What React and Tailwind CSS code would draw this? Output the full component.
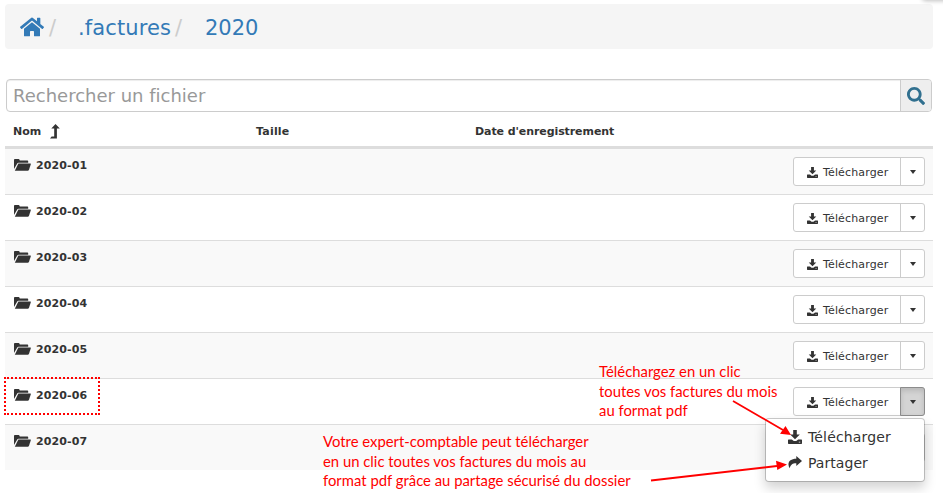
import { FaHome, FaSearch } from "react-icons/fa";

const months = ["2020-01", "2020-02", "2020-03", "2020-04", "2020-05", "2020-06", "2020-07"];

function FolderIcon() {
  return (
    <svg className="-mt-[2px] h-[12px] w-[17px] shrink-0" viewBox="0 0 17 12" fill="#333">
      <path d="M0 10V1.200C0 .5.4.1 1 .1h3.600c.5 0 .9.3 1 .8l.2.600h7.400c.6 0 1 .4 1 1v1.300H4.600c-.7 0-1.200.4-1.500 1z" />
      <path d="M4.400 4.500h12c.4 0 .6.3.5.6l-2 5.800c-.2.5-.6.8-1.100.8H.8z" />
    </svg>
  );
}

function DownloadIcon({ className }) {
  return (
    <svg className={className} viewBox="0 0 14 14" fill="#333">
      <path d="M5.200 0h3.600v4.500h3L7 9.300 2.200 4.500h3z" />
      <path d="M.6 9.400H3.800L5.800 11h2.400L10.200 9.400h3.200c.3 0 .6.3.6.6v3.200c0 .4-.3.7-.6.7H.6c-.3 0-.6-.3-.6-.7V10c0-.3.3-.6.6-.6zm10.200 2.300v.8h1.500v-.8z" fillRule="evenodd" />
    </svg>
  );
}

function ShareIcon() {
  return (
    <svg className="-mt-px h-[13px] w-[14px]" viewBox="0 0 14 13" fill="#333">
      <path d="M8.300 0 14 5l-5.700 5V7.300C5 7.200 3 8 1.700 12.300-1.400 7 1.500 2.700 8.300 2.700z" />
    </svg>
  );
}

function SortIcon() {
  return (
    <svg className="ml-[9px] h-[15px] w-[10px]" viewBox="0 0 10 15" fill="#333">
      <path d="M5.500 0 9.800 4.600H6.900V14.500H0L1.600 12.400H4.200V4.600H1.300z" />
    </svg>
  );
}

function SplitButton({ open, covered }) {
  return (
    <div className="mr-2 mt-2 flex h-[29px] w-[132px] shrink-0 rounded-[3px] border border-[#ccc] bg-white">
      <div className="flex w-[106px] items-center pl-[13px]">
        {!covered && (
          <>
            <DownloadIcon className="mt-px h-[11px] w-[11px]" />
            <span className="ml-[5px] mt-[3px] text-[11px] tracking-[0.15px]">Télécharger</span>
          </>
        )}
      </div>
      <div className={open ? "-my-px -mr-px flex w-[25px] items-center justify-center rounded-r-[3px] border border-[#8c8c8c] bg-[#d4d4d4] shadow-[inset_0_3px_5px_rgba(0,0,0,0.125)]" : "flex flex-1 items-center justify-center border-l border-[#ccc]"}>
        <span className="mt-px border-x-[3px] border-t-[4px] border-x-transparent border-t-[#333]" />
      </div>
    </div>
  );
}

function Menu() {
  return (
    <div className="absolute left-[765px] top-[418px] h-[64px] w-[160px] rounded-[4px] border border-black/20 bg-white bg-clip-padding pt-[5px] text-[14px] leading-[26px] tracking-[0.15px] shadow-[0_6px_12px_rgba(0,0,0,0.175)]">
      <div className="flex items-center pl-[22px]">
        <DownloadIcon className="h-[14px] w-[14px]" />
        <span className="ml-[6px]">Télécharger</span>
      </div>
      <div className="flex items-center pl-[22px]">
        <ShareIcon />
        <span className="ml-[6px] tracking-[0.05px]">Partager</span>
      </div>
    </div>
  );
}

export default function App() {
  return (
    <div className="relative h-[493px] w-[943px] overflow-hidden whitespace-nowrap bg-white pl-[5px] pt-[4px] font-['DejaVu_Sans',sans-serif] text-[#333] [font-variant-ligatures:none]">
      <div className="absolute -top-[10px] left-[922px] h-[10px] w-[40px] rounded-[4px] shadow-[0_1px_4px_rgba(0,0,0,0.25)]" />
      <nav className="flex h-[45px] w-[928px] items-center rounded-[4px] bg-[#f5f5f5] pl-[15px] text-[21px] text-[#337ab7]">
        <FaHome className="h-[24px] w-[24px]" />
        <span className="ml-[5px] mt-[5px] w-[25px] text-[#ccc]">/</span>
        <span className="ml-[4px] mt-[4px] w-[93px] tracking-[0.1px]">.factures</span>
        <span className="ml-[4px] mt-[5px] w-[25px] text-[#ccc]">/</span>
        <span className="ml-[5px] mt-[4px]">2020</span>
      </nav>
      <div className="ml-px mt-[30px] flex h-[33px] w-[926px] overflow-hidden rounded-[4px] border border-[#ccc] shadow-[inset_0_1px_1px_rgba(0,0,0,0.075)]">
        <div className="flex flex-1 items-center pl-[6px] text-[18px] text-[#999]">Rechercher un fichier</div>
        <div className="flex w-[31px] items-center justify-center border-l border-[#ccc] bg-[#eee]">
          <FaSearch className="h-[18px] w-[18px] text-[#31708f]" />
        </div>
      </div>
      <div className="flex h-[37px] w-[928px] items-center border-b-[3px] border-[#ddd] pl-2 pt-[6px] text-[11px] font-bold">
        <div className="flex w-[243px] items-center">Nom<span className="-mt-[2px]"><SortIcon /></span></div>
        <div className="w-[219px] tracking-[0.2px]">Taille</div>
        <div className="tracking-[-0.08px]">Date d'enregistrement</div>
      </div>
      <div className="w-[928px]">
        {months.map((month, i) => (
          <div key={month} className="flex h-[46px] justify-between border-b border-[#ddd] odd:bg-[#f9f9f9] last:h-[45px] last:border-b-0">
            <div className="flex h-[33px] items-center pl-[9px] text-[11px] font-bold">
              <FolderIcon />
              <span className="ml-[5px] mt-[2px] tracking-[0.1px]">{month}</span>
            </div>
            <SplitButton open={i === 5} covered={i === 6} />
          </div>
        ))}
      </div>
      <Menu />
      <div className="absolute left-[4px] top-[377px] h-[38px] w-[96px] border-2 border-dotted border-[#f00]" />
      <div className="absolute left-[599px] top-[362px] font-['Lato',sans-serif] text-[14.850px] leading-[19.500px] text-[#f00]">
        <p>Téléchargez en un clic</p>
        <p>toutes vos factures du mois</p>
        <p>au format pdf</p>
      </div>
      <div className="absolute left-[323px] top-[432px] font-['Lato',sans-serif] text-[14.850px] leading-[19.500px] text-[#f00]">
        <p>Votre expert-comptable peut télécharger</p>
        <p>en un clic toutes vos factures du mois au</p>
        <p>format pdf grâce au partage sécurisé du dossier</p>
      </div>
      <svg className="absolute left-0 top-0 h-[493px] w-[943px]" viewBox="0 0 943 493" fill="#f00" stroke="#f00">
        <path d="M733 401 783 430M651 480.500 777 466" strokeWidth="1.800" />
        <path d="M791 435 780 433.800 785.500 426zM787 464.500 776 460.700 777.300 470z" stroke="none" />
      </svg>
    </div>
  );
}
